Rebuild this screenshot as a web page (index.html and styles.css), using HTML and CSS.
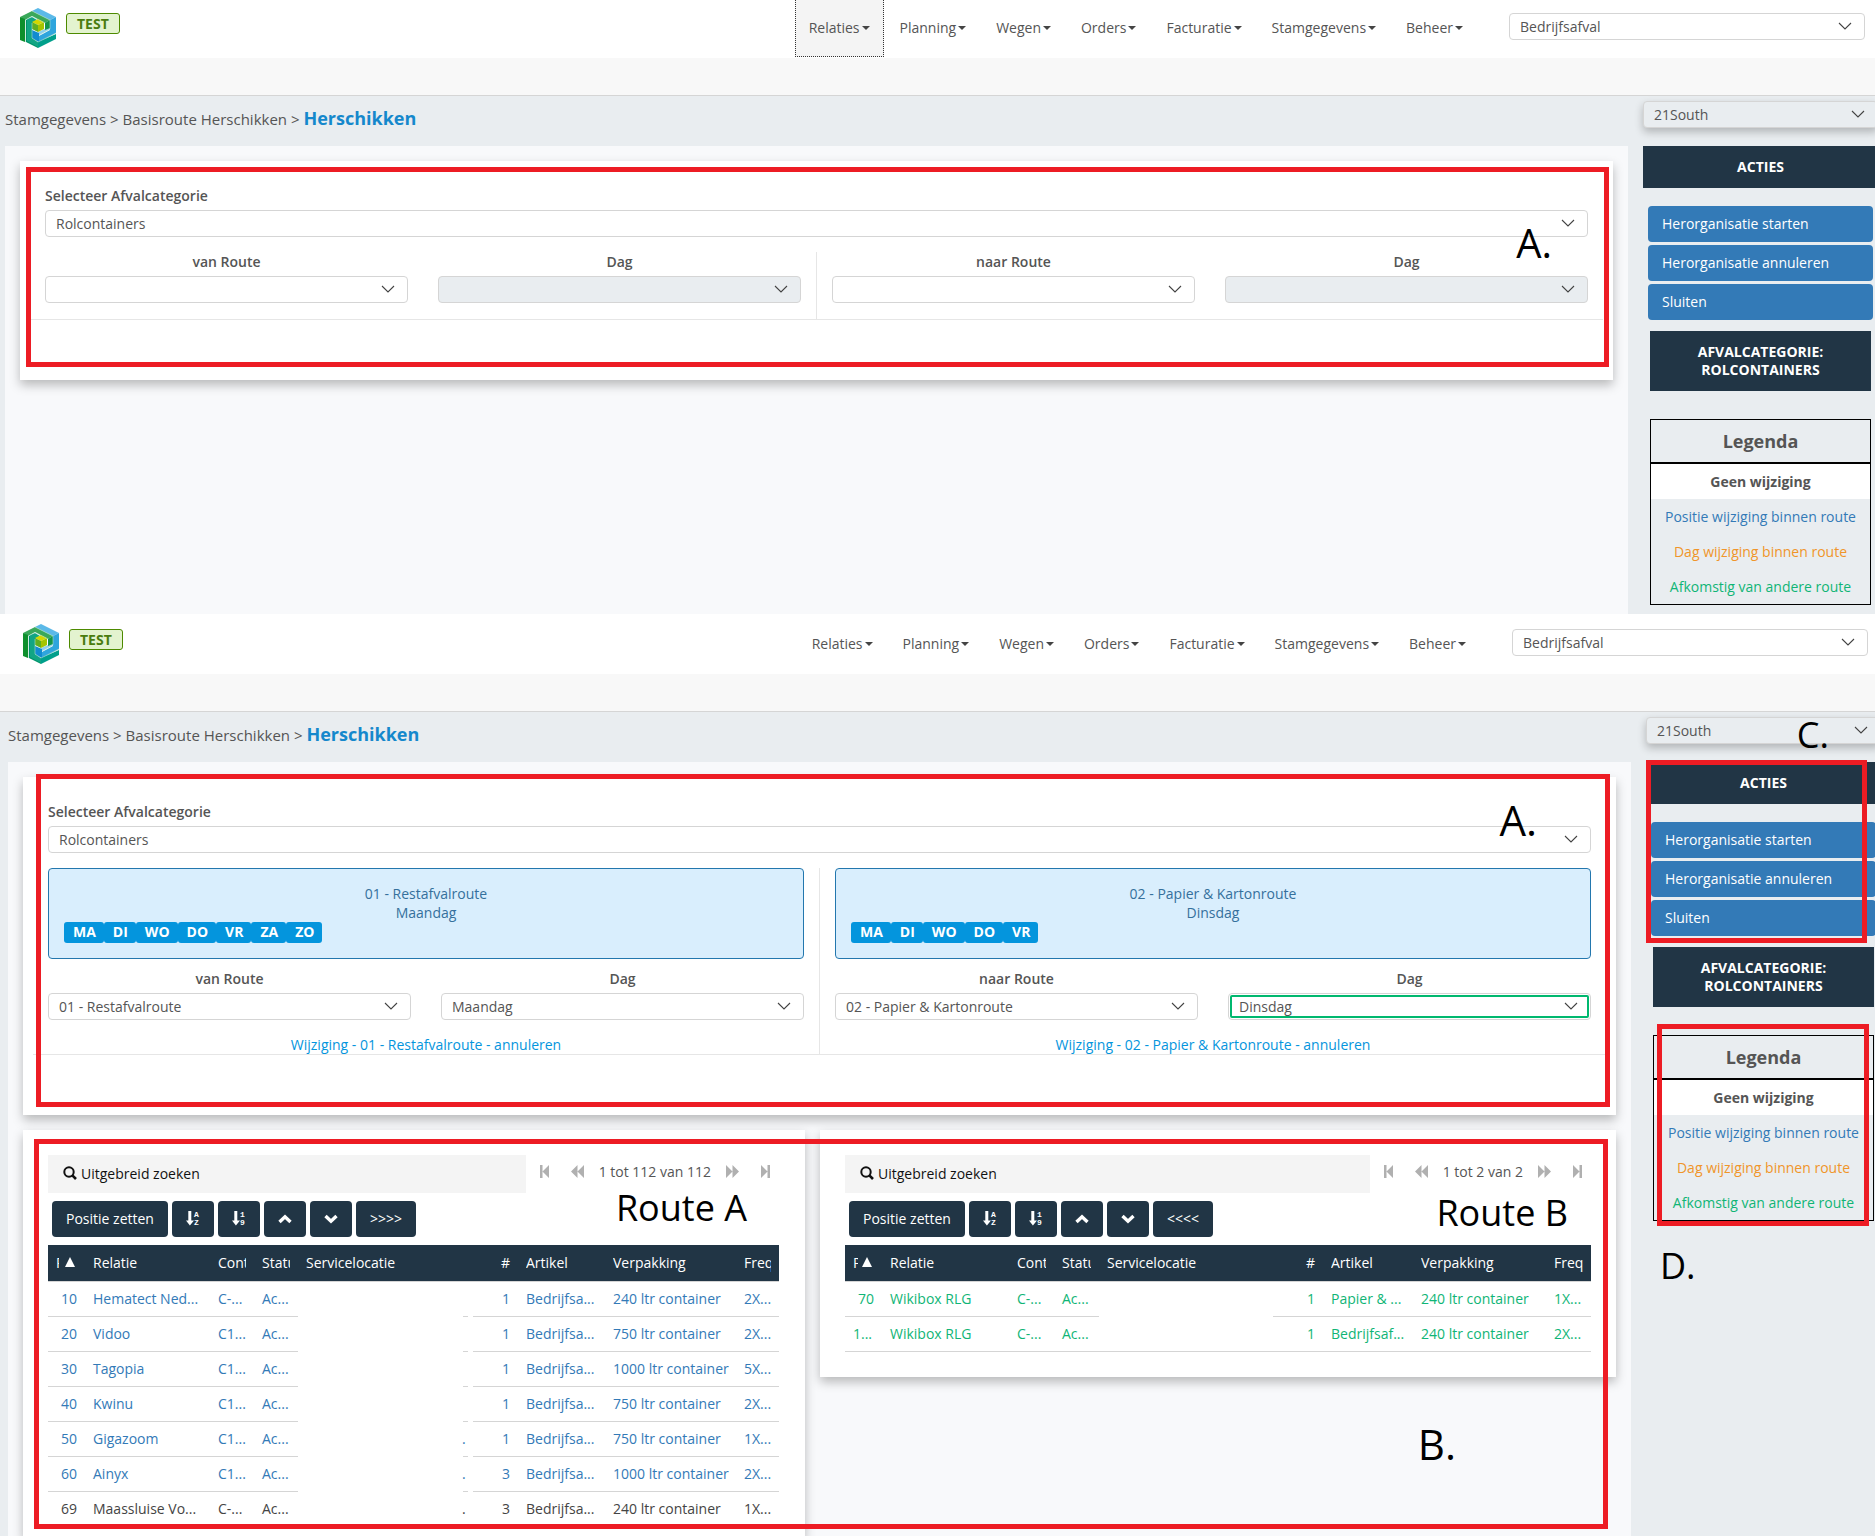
FILE: index.html
```html
<!DOCTYPE html>
<html lang="nl">
<head>
<meta charset="utf-8">
<title>Basisroute Herschikken</title>
<link rel="stylesheet" href="styles.css">
</head>
<body>
<svg class="sprite" aria-hidden="true">
  <symbol id="logo" viewBox="0 0 36 40">
    <path fill="#5bb9e8" d="M12 3 18 0 36 9 30 12Z"/>
    <path fill="#2fa5dd" d="M30 12 36 9V25L19 34 13 31V27L19 28 30 22Z"/>
    <path fill="#8fd0ee" d="M25 15 30 12V21L19 27 18 24 25 21Z"/>
    <path fill="#128bd0" d="M12 22 19 25V34L12 30Z"/>
    <path fill="#3aa85a" d="M0 9 12 3 30 12 25 15 12 8 5 12Z"/>
    <path fill="#0e8f2c" d="M0 9 5 11V34L0 32Z"/>
    <path fill="#14964a" d="M25 15 30 12V20L25 22Z"/>
    <path fill="#009468" d="M6 12 8 11V32L18 37V40L6 34Z"/>
    <path fill="#12a584" d="M7 11 12 9 17 12 12 15V30L18 34V39L7 33Z"/>
    <path fill="#009f8b" d="M18 34 36 26V31L18 40Z"/>
    <path fill="#d3d800" d="M12 14 18 11 24 14 18 17Z"/>
    <path fill="#5fae22" d="M12 14 18 17V24L12 21Z"/>
    <path fill="#a5c400" d="M18 17 24 14V21L18 24Z"/>
    <path fill="none" stroke="#a9dccb" stroke-width=".6" d="M5.500 34V12L12 8.500 25 15M12 3 30 12V21L19 27M12 15V30L18 34 36 25"/>
  </symbol>
  <symbol id="search" viewBox="0 0 14 14">
    <circle cx="6" cy="6" r="4.700" fill="none" stroke="currentColor" stroke-width="2"/>
    <path d="M9.300 9.300 13 13" stroke="currentColor" stroke-width="2.600"/>
  </symbol>
  <symbol id="arrow" viewBox="0 0 14 15">
    <path fill="currentColor" d="M2.300 0h3v9.500H8L3.900 14.500 0 9.500h2.300Z"/>
  </symbol>
  <symbol id="up" viewBox="0 0 14 10"><path d="M1.500 8 7 2.800 12.500 8" fill="none" stroke="currentColor" stroke-width="3.400"/></symbol>
  <symbol id="down" viewBox="0 0 14 10"><path d="M1.500 2 7 7.200 12.500 2" fill="none" stroke="currentColor" stroke-width="3.400"/></symbol>
  <symbol id="first" viewBox="0 0 9 13"><path fill="currentColor" d="M0 0h2.500v13H0ZM9 0v13L2.500 6.500Z"/></symbol>
  <symbol id="prev" viewBox="0 0 13 13"><path fill="currentColor" d="M6.500 0v13L0 6.500ZM13 0v13L6.500 6.500Z"/></symbol>
  <symbol id="next" viewBox="0 0 13 13"><path fill="currentColor" d="M0 0v13L6.500 6.500ZM6.500 0v13L13 6.500Z"/></symbol>
  <symbol id="last" viewBox="0 0 9 13"><path fill="currentColor" d="M6.500 0H9v13H6.500ZM0 0v13L6.500 6.500Z"/></symbol>
</svg>

<section class="screen">
  <header class="topbar">
    <svg class="logo" role="img" aria-label="Logo"><use href="#logo"/></svg>
    <span class="env">TEST</span>
    <nav class="nav">
      <a class="nav-item is-focused" href="#">Relaties</a>
      <a class="nav-item" href="#">Planning</a>
      <a class="nav-item" href="#">Wegen</a>
      <a class="nav-item" href="#">Orders</a>
      <a class="nav-item" href="#">Facturatie</a>
      <a class="nav-item" href="#">Stamgegevens</a>
      <a class="nav-item" href="#">Beheer</a>
    </nav>
    <select class="select topbar-select" aria-label="Afvaltype"><option>Bedrijfsafval</option></select>
  </header>
  <div class="subbar"></div>
  <div class="page">
    <main class="main">
      <div class="crumbs"><a href="#">Stamgegevens</a> &gt; <a href="#">Basisroute Herschikken</a> &gt; <strong>Herschikken</strong></div>
      <div class="panel">
        <div class="card filter">
          <label class="label" for="cat1">Selecteer Afvalcategorie</label>
          <select class="select" id="cat1"><option>Rolcontainers</option></select>
          <div class="halves">
            <div class="half">
              <div class="fields">
                <div class="field"><label for="van1">van Route</label><select class="select" id="van1"><option></option></select></div>
                <div class="field"><label for="vd1">Dag</label><select class="select" id="vd1" disabled><option></option></select></div>
              </div>
            </div>
            <div class="half">
              <div class="fields">
                <div class="field"><label for="naar1">naar Route</label><select class="select" id="naar1"><option></option></select></div>
                <div class="field"><label for="nd1">Dag</label><select class="select" id="nd1" disabled><option></option></select></div>
              </div>
            </div>
          </div>
          <div class="mark mark-filter"></div>
          <span class="note note-a">A.</span>
        </div>
      </div>
    </main>
    <aside class="side">
      <select class="select side-select" aria-label="Vestiging"><option>21South</option></select>
      <div class="actions">
        <h2 class="side-title">ACTIES</h2>
        <div class="action-list">
          <button class="action" type="button">Herorganisatie starten</button>
          <button class="action" type="button">Herorganisatie annuleren</button>
          <button class="action" type="button">Sluiten</button>
        </div>
      </div>
      <div class="category">AFVALCATEGORIE:<br>ROLCONTAINERS</div>
      <div class="legend">
        <h3>Legenda</h3>
        <p class="same">Geen wijziging</p>
        <p class="moved">Positie wijziging binnen route</p>
        <p class="day">Dag wijziging binnen route</p>
        <p class="other">Afkomstig van andere route</p>
      </div>
    </aside>
  </div>
</section>

<section class="screen screen-second">
  <header class="topbar">
    <svg class="logo" role="img" aria-label="Logo"><use href="#logo"/></svg>
    <span class="env">TEST</span>
    <nav class="nav">
      <a class="nav-item" href="#">Relaties</a>
      <a class="nav-item" href="#">Planning</a>
      <a class="nav-item" href="#">Wegen</a>
      <a class="nav-item" href="#">Orders</a>
      <a class="nav-item" href="#">Facturatie</a>
      <a class="nav-item" href="#">Stamgegevens</a>
      <a class="nav-item" href="#">Beheer</a>
    </nav>
    <select class="select topbar-select" aria-label="Afvaltype"><option>Bedrijfsafval</option></select>
  </header>
  <div class="subbar"></div>
  <div class="page">
    <main class="main">
      <div class="crumbs"><a href="#">Stamgegevens</a> &gt; <a href="#">Basisroute Herschikken</a> &gt; <strong>Herschikken</strong></div>
      <div class="panel">
        <div class="card filter">
          <label class="label" for="cat2">Selecteer Afvalcategorie</label>
          <select class="select" id="cat2"><option>Rolcontainers</option></select>
          <div class="halves">
            <div class="half">
              <div class="route-info">
                <p>01 - Restafvalroute<br>Maandag</p>
                <div class="days"><span>MA</span><span>DI</span><span>WO</span><span>DO</span><span>VR</span><span>ZA</span><span>ZO</span></div>
              </div>
              <div class="fields">
                <div class="field"><label for="van2">van Route</label><select class="select" id="van2"><option>01 - Restafvalroute</option></select></div>
                <div class="field"><label for="vd2">Dag</label><select class="select" id="vd2"><option>Maandag</option></select></div>
              </div>
              <a class="cancel" href="#">Wijziging - 01 - Restafvalroute - annuleren</a>
            </div>
            <div class="half">
              <div class="route-info">
                <p>02 - Papier &amp; Kartonroute<br>Dinsdag</p>
                <div class="days"><span>MA</span><span>DI</span><span>WO</span><span>DO</span><span>VR</span></div>
              </div>
              <div class="fields">
                <div class="field"><label for="naar2">naar Route</label><select class="select" id="naar2"><option>02 - Papier &amp; Kartonroute</option></select></div>
                <div class="field"><label for="nd2">Dag</label><select class="select is-active" id="nd2"><option>Dinsdag</option></select></div>
              </div>
              <a class="cancel" href="#">Wijziging - 02 - Papier &amp; Kartonroute - annuleren</a>
            </div>
          </div>
          <div class="mark mark-filter-filled"></div>
          <span class="note note-large note-a-filled">A.</span>
        </div>

        <div class="routes">
          <section class="card route">
            <div class="finder">
              <button class="search" type="button"><svg width="14" height="14"><use href="#search"/></svg>Uitgebreid zoeken</button>
              <div class="pager">
                <button type="button" aria-label="Eerste"><svg width="9" height="13"><use href="#first"/></svg></button>
                <button type="button" aria-label="Vorige"><svg width="13" height="13"><use href="#prev"/></svg></button>
                <span>1 tot 112 van 112</span>
                <button type="button" aria-label="Volgende"><svg width="13" height="13"><use href="#next"/></svg></button>
                <button type="button" aria-label="Laatste"><svg width="9" height="13"><use href="#last"/></svg></button>
              </div>
            </div>
            <div class="tools">
              <button type="button">Positie zetten</button>
              <button type="button" aria-label="Sorteer A-Z"><svg class="sort" width="14" height="15"><use href="#arrow"/><text x="8" y="6">A</text><text x="8" y="14">Z</text></svg></button>
              <button type="button" aria-label="Sorteer 1-9"><svg class="sort" width="14" height="15"><use href="#arrow"/><text x="8" y="6">1</text><text x="8" y="14">9</text></svg></button>
              <button type="button" aria-label="Omhoog"><svg width="14" height="10"><use href="#up"/></svg></button>
              <button type="button" aria-label="Omlaag"><svg width="14" height="10"><use href="#down"/></svg></button>
              <button type="button">&gt;&gt;&gt;&gt;</button>
            </div>
            <table class="grid grid-a">
              <colgroup><col class="c-pos"><col class="c-rel"><col class="c-con"><col class="c-sta"><col><col class="c-num"><col class="c-art"><col class="c-pack"><col class="c-freq"></colgroup>
              <thead><tr><th class="sort-cell"><div class="sorted"><span>P</span><i></i></div></th><th><div>Relatie</div></th><th><div>Conti</div></th><th><div>Statu</div></th><th><div>Servicelocatie</div></th><th class="num">#</th><th><div>Artikel</div></th><th><div>Verpakking</div></th><th><div>Freq</div></th></tr></thead>
              <tbody>
                <tr><td class="num">10</td><td>Hematect Ned...</td><td>C-...</td><td>Ac...</td><td class="blank"></td><td class="num">1</td><td>Bedrijfsa...</td><td>240 ltr container</td><td>2X...</td></tr>
                <tr><td class="num">20</td><td>Vidoo</td><td>C1...</td><td>Ac...</td><td class="blank"></td><td class="num">1</td><td>Bedrijfsa...</td><td>750 ltr container</td><td>2X...</td></tr>
                <tr><td class="num">30</td><td>Tagopia</td><td>C1...</td><td>Ac...</td><td class="blank"></td><td class="num">1</td><td>Bedrijfsa...</td><td>1000 ltr container</td><td>5X...</td></tr>
                <tr><td class="num">40</td><td>Kwinu</td><td>C1...</td><td>Ac...</td><td class="blank"></td><td class="num">1</td><td>Bedrijfsa...</td><td>750 ltr container</td><td>2X...</td></tr>
                <tr><td class="num">50</td><td>Gigazoom</td><td>C1...</td><td>Ac...</td><td class="blank">.</td><td class="num">1</td><td>Bedrijfsa...</td><td>750 ltr container</td><td>1X...</td></tr>
                <tr><td class="num">60</td><td>Ainyx</td><td>C1...</td><td>Ac...</td><td class="blank">.</td><td class="num">3</td><td>Bedrijfsa...</td><td>1000 ltr container</td><td>2X...</td></tr>
                <tr class="unchanged"><td class="num">69</td><td>Maassluise Vo...</td><td>C-...</td><td>Ac...</td><td class="blank">.</td><td class="num">3</td><td>Bedrijfsa...</td><td>240 ltr container</td><td>1X...</td></tr>
              </tbody>
            </table>
            <span class="note note-small note-route-a">Route A</span>
          </section>

          <section class="card route route-short">
            <div class="finder">
              <button class="search" type="button"><svg width="14" height="14"><use href="#search"/></svg>Uitgebreid zoeken</button>
              <div class="pager">
                <button type="button" aria-label="Eerste"><svg width="9" height="13"><use href="#first"/></svg></button>
                <button type="button" aria-label="Vorige"><svg width="13" height="13"><use href="#prev"/></svg></button>
                <span>1 tot 2 van 2</span>
                <button type="button" aria-label="Volgende"><svg width="13" height="13"><use href="#next"/></svg></button>
                <button type="button" aria-label="Laatste"><svg width="9" height="13"><use href="#last"/></svg></button>
              </div>
            </div>
            <div class="tools">
              <button type="button">Positie zetten</button>
              <button type="button" aria-label="Sorteer A-Z"><svg class="sort" width="14" height="15"><use href="#arrow"/><text x="8" y="6">A</text><text x="8" y="14">Z</text></svg></button>
              <button type="button" aria-label="Sorteer 1-9"><svg class="sort" width="14" height="15"><use href="#arrow"/><text x="8" y="6">1</text><text x="8" y="14">9</text></svg></button>
              <button type="button" aria-label="Omhoog"><svg width="14" height="10"><use href="#up"/></svg></button>
              <button type="button" aria-label="Omlaag"><svg width="14" height="10"><use href="#down"/></svg></button>
              <button type="button">&lt;&lt;&lt;&lt;</button>
            </div>
            <table class="grid grid-b">
              <colgroup><col class="c-pos"><col class="c-rel"><col class="c-con"><col class="c-sta"><col><col class="c-num"><col class="c-art"><col class="c-pack"><col class="c-freq"></colgroup>
              <thead><tr><th class="sort-cell"><div class="sorted"><span>P</span><i></i></div></th><th><div>Relatie</div></th><th><div>Cont</div></th><th><div>Statu</div></th><th><div>Servicelocatie</div></th><th class="num">#</th><th><div>Artikel</div></th><th><div>Verpakking</div></th><th><div>Freq</div></th></tr></thead>
              <tbody>
                <tr><td class="num">70</td><td>Wikibox RLG</td><td>C-...</td><td>Ac...</td><td class="blank"></td><td class="num">1</td><td>Papier &amp; ...</td><td>240 ltr container</td><td>1X...</td></tr>
                <tr><td>1...</td><td>Wikibox RLG</td><td>C-...</td><td>Ac...</td><td></td><td class="num">1</td><td>Bedrijfsaf...</td><td>240 ltr container</td><td>2X...</td></tr>
              </tbody>
            </table>
            <span class="note note-small note-route-b">Route B</span>
          </section>
          <div class="mark mark-routes"></div>
          <span class="note note-large note-b">B.</span>
        </div>
      </div>
    </main>
    <aside class="side">
      <select class="select side-select" aria-label="Vestiging"><option>21South</option></select>
      <div class="actions">
        <h2 class="side-title">ACTIES</h2>
        <div class="action-list">
          <button class="action" type="button">Herorganisatie starten</button>
          <button class="action" type="button">Herorganisatie annuleren</button>
          <button class="action" type="button">Sluiten</button>
        </div>
        <div class="mark mark-actions"></div>
        <span class="note note-small note-c">C.</span>
      </div>
      <div class="category">AFVALCATEGORIE:<br>ROLCONTAINERS</div>
      <div class="legend">
        <h3>Legenda</h3>
        <p class="same">Geen wijziging</p>
        <p class="moved">Positie wijziging binnen route</p>
        <p class="day">Dag wijziging binnen route</p>
        <p class="other">Afkomstig van andere route</p>
        <div class="mark mark-legend"></div>
        <span class="note note-small note-d">D.</span>
      </div>
    </aside>
  </div>
</section>
</body>
</html>
```
FILE: styles.css
```css
:root {
  --navy: #213545;
  --blue: #337ab7;
  --sky: #0495dd;
  --green: #10b576;
  --orange: #f0952a;
  --line: #d5d5d5;
  --ground: #e9edf0;
  --text: #555;
}

* { box-sizing: border-box; }

body {
  margin: 0;
  min-height: 100vh;
  display: flex;
  flex-direction: column;
  font: 14px/19px "Open Sans", "Noto Sans", sans-serif;
  color: var(--text);
  background: #fff;
}

h2, h3, p { margin: 0; }
a { color: inherit; text-decoration: none; }
button { font: inherit; border: 0; cursor: pointer; }
svg { display: block; flex: none; }
.sprite { position: absolute; width: 0; height: 0; }

.screen { display: flex; flex-direction: column; overflow: hidden; }
.screen-second { flex: 1; padding-top: 2px; }
.screen-second .topbar { margin: 0 -3px 0 3px; }
.screen-second .page { padding-left: 8px; margin-right: -3px; }

/* Top bar */
.topbar { display: flex; align-items: flex-start; height: 58px; padding: 0 10px 0 20px; }
.logo { width: 36px; height: 40px; margin-top: 8px; }
.env {
  margin: 13px 0 0 10px;
  padding: 0 10px;
  border: 1px solid #4d8a00;
  border-radius: 3px;
  background: #e3f3cf;
  color: #4a7c10;
  font-weight: 700;
}
.nav { display: flex; margin-left: auto; height: 57px; }
.nav-item { display: flex; align-items: center; padding: 0 15px 2px; position: relative; }
.nav-item::after {
  content: "";
  margin-left: 2px;
  border: 4px solid transparent;
  border-top-color: #444;
  border-bottom: 0;
}
.is-focused { margin: 0 1px; padding: 0 13px 1px; background: #f4f4f4; border: 1px dotted #333; border-top: 0; }
.subbar { height: 38px; background: #f8f8f8; border-bottom: 1px solid var(--line); }

.select {
  appearance: none;
  display: block;
  width: 100%;
  height: 27px;
  padding: 0 32px 0 10px;
  border: 1px solid var(--line);
  border-radius: 4px;
  background: #fff url("data:image/svg+xml,%3Csvg xmlns='http://www.w3.org/2000/svg' viewBox='0 0 16 16'%3E%3Cpath fill='none' stroke='%23444' stroke-width='1.1' d='M2 5l6 6 6-6'/%3E%3C/svg%3E") no-repeat right 11px top 4px / 16px 16px;
  color: var(--text);
  font: inherit;
  opacity: 1;
}
.select:disabled { background-color: var(--ground); }
.is-active { outline: 2px solid #00b86f; outline-offset: -4px; }
.topbar-select { width: 356px; margin: 13px 0 0 31px; }

/* Page layout */
.page { flex: 1; display: flex; gap: 15px; padding-left: 5px; background: var(--ground); }
.main { flex: 1; min-width: 0; display: flex; flex-direction: column; }
.crumbs { height: 50px; padding-top: 7px; font-size: 15px; line-height: 30px; }
.crumbs strong { font-size: 18px; font-weight: 700; color: #1588cc; }
.panel { flex: 1; display: flex; flex-direction: column; gap: 15px; padding: 15px 15px 0; background: #f8f9fb; }
.card { position: relative; background: #fff; box-shadow: 0 5px 10px rgba(0, 0, 0, .26); }

/* Route filter */
.filter { padding: 25px 25px 60px; }
.label { display: block; margin-bottom: 5px; font-weight: 600; }
.halves { display: flex; margin: 15px -15px 0; border-bottom: 1px solid #e6e6e6; }
.half { flex: 1; min-width: 0; padding: 0 15px; text-align: center; }
.half + .half { border-left: 1px solid #e6e6e6; }
.fields { display: flex; gap: 30px; padding-bottom: 16px; }
.field { flex: 1; min-width: 0; }
.field label { display: block; margin-bottom: 5px; font-weight: 600; }
.route-info {
  height: 91px;
  margin-bottom: 10px;
  padding: 15px;
  border: 1px solid #2377ae;
  border-radius: 4px;
  background: #d9eefd;
  color: #35709c;
}
.days { display: flex; }
.days span {
  padding: 0 8px 2px 9px;
  border-radius: 3px;
  background: var(--sky);
  color: #fff;
  font-weight: 700;
}
.cancel { display: block; line-height: 18px; color: var(--sky); }

/* Route tables */
.routes { flex: 1; display: grid; grid-template-columns: 782fr 796fr; gap: 15px; position: relative; }
.route { min-width: 0; padding: 25px 26px 10px 25px; }
.route-short { align-self: start; padding: 25px; }
.finder { display: flex; }
.search {
  flex: 1;
  display: flex;
  align-items: center;
  gap: 4px;
  height: 38px;
  padding: 0 15px 2px;
  background: #f4f4f4;
  color: #111;
}
.pager { display: flex; align-items: center; gap: 15px; height: 32px; padding: 0 9px 0 14px; }
.pager button { padding: 0; background: none; color: #b0b0b0; }
.pager button:first-child { margin-right: 7px; }
.pager button:last-child { margin-left: 7px; }
.tools { display: flex; gap: 4px; padding: 8px 4px; }
.tools button {
  display: grid;
  place-items: center;
  height: 36px;
  padding: 0 14px 1px;
  border-radius: 4px;
  background: var(--navy);
  color: #fff;
}
.sort text { font: 700 8px/8px "Liberation Mono", monospace; fill: #fff; }

.grid { width: 100%; table-layout: fixed; border-spacing: 0; color: var(--blue); }
.grid th { height: 37px; padding: 0 8px 2px; border-bottom: 1px solid var(--line); background: var(--navy); color: #fff; font-weight: 500; text-align: left; }
.grid th div { overflow: hidden; white-space: nowrap; }
.grid td { height: 35px; padding: 0 0 2px 8px; border-bottom: 1px solid var(--line); white-space: nowrap; }
.grid .num { padding: 0 8px 2px 0; text-align: right; }
.grid-b { color: var(--green); }
.grid .unchanged { color: #444; }
.grid .sort-cell { padding-right: 10px; }
.sorted { display: flex; align-items: center; justify-content: space-between; }
.sorted span { width: 3px; overflow: hidden; }
.grid-b .sorted span { width: 5px; }
.sorted i { border: 5px solid transparent; border-bottom: 10px solid #fff; border-top: 0; }
.c-pos { width: 37px; }
.c-rel { width: 125px; }
.c-con, .c-sta { width: 44px; }
.c-num { width: 40px; }
.c-art { width: 87px; }
.c-pack { width: 131px; }
.c-freq { width: 43px; }
.grid-b .c-rel { width: 127px; }
.grid-b .c-con, .grid-b .c-sta, .grid-b .c-freq { width: 45px; }
.grid-b .c-num { width: 50px; }
.grid-b .c-art { width: 90px; }
.grid-b .c-pack { width: 133px; }
.grid .blank { border-bottom: 0; }
.grid-a .blank {
  padding-left: 164px;
  background:
    linear-gradient(var(--line), var(--line)) no-repeat 165px 100% / 5px 1px,
    linear-gradient(var(--line), var(--line)) no-repeat 175px 100% / 5px 1px;
}

/* Sidebar */
.side { flex: none; width: 235px; margin-right: -3px; padding: 5px 0 9px; }
.side-select { background-color: var(--ground); box-shadow: 0 4px 8px rgba(0, 0, 0, .24); }
.actions { position: relative; margin-top: 18px; }
.side-title { padding: 11px 0 12px; background: var(--navy); color: #fff; font-size: 14px; line-height: 19px; text-align: center; }
.action-list { display: flex; flex-direction: column; gap: 3px; padding: 18px 5px 0; }
.action { height: 36px; padding: 0 14px 2px; border-radius: 4px; background: var(--blue); color: #fff; text-align: left; }
.category {
  margin: 11px 7px 28px;
  padding: 12px 0;
  background: var(--navy);
  color: #fff;
  font-weight: 700;
  line-height: 18px;
  text-align: center;
}
.legend { position: relative; margin: 0 7px; border: 1px solid #000; text-align: center; }
.legend h3 { border-bottom: 2px solid #000; font-size: 18px; font-weight: 700; line-height: 42px; }
.legend p { line-height: 35px; }
.legend .same { background: #fff; font-weight: 700; }
.moved { color: var(--blue); }
.day { color: var(--orange); }
.other { color: var(--green); }

/* Annotations drawn over the screens */
.mark { position: absolute; border: 5px solid #ed1c24; pointer-events: none; }
.mark-filter { inset: 6px 4px 13px 6px; }
.mark-filter-filled { inset: -3px 6px 8px 13px; }
.mark-routes { inset: 9px 8px 8px 11px; }
.mark-actions { inset: -2px 14px -7px 0; }
.mark-legend { inset: -12px 4px -6px 3px; }
.note { position: absolute; color: #000; font-size: 40px; line-height: 1; white-space: nowrap; pointer-events: none; }
.note-small { font-size: 36px; }
.note-large { font-size: 42px; }
.note-a { top: 62px; right: 61px; }
.note-a-filled { top: 22px; right: 79px; }
.note-route-a { top: 60px; right: 58px; }
.note-route-b { top: 65px; right: 48px; }
.note-b { top: 293px; right: 160px; }
.note-c { top: -45px; right: 52px; }
.note-d { top: 212px; left: 6px; }
```
